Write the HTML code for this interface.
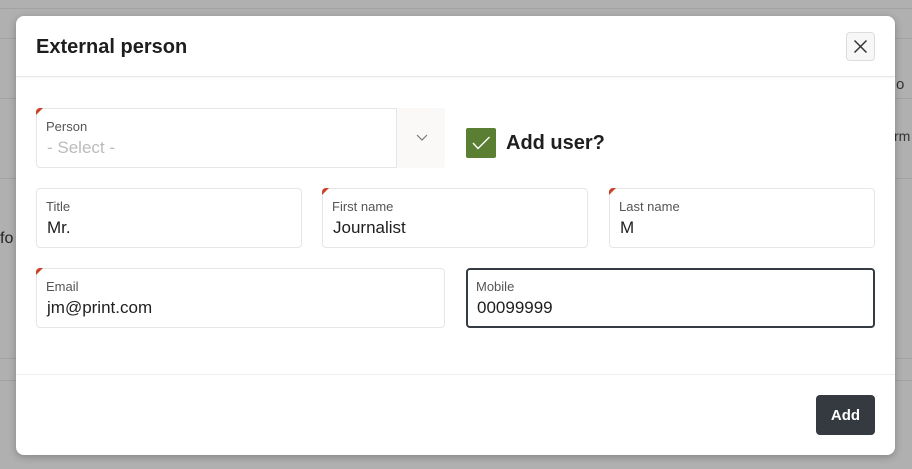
<!DOCTYPE html>
<html><head><style>
*{box-sizing:border-box;margin:0;padding:0}
body{width:912px;height:469px;background:#b0b0b0;font-family:"Liberation Sans",sans-serif;position:relative;overflow:hidden}
.bgl{position:absolute;left:0;right:0;height:1px;background:#a2a2a2}
.modal{position:absolute;left:16px;top:16px;width:879px;height:439px;background:#fff;border-radius:8px;box-shadow:0 2px 8px rgba(0,0,0,.25)}
.hdr{position:absolute;left:0;top:0;right:0;height:61px;border-bottom:1px solid #e8e8e8;border-radius:8px 8px 0 0;box-shadow:0 1px 2px rgba(0,0,0,.04)}
.hdr h1{position:absolute;left:20px;top:20px;font-size:20px;font-weight:bold;color:#1e1e1e}
.close{position:absolute;left:830px;top:16px;width:29px;height:29px;border:1px solid #ddd;border-radius:4px;background:#f7f7f7}
.f{position:absolute;border:1px solid #e6e6e6;border-radius:4px;background:#fff;height:60px}
.f .l{position:absolute;left:9px;top:10px;font-size:13px;color:#555}
.f .v{position:absolute;left:10px;top:29px;font-size:17px;color:#1e1e1e}
.req::before{content:"";position:absolute;left:-1px;top:-1px;border-top:7px solid #c9432b;border-right:7px solid transparent;border-top-left-radius:4px}
.foot{position:absolute;left:0;right:0;top:358px;border-top:1px solid #eee}
.add{position:absolute;left:800px;top:379px;width:59px;height:40px;background:#343a40;border-radius:4px;color:#fff;font-weight:bold;font-size:15px;text-align:center;line-height:42px}
</style></head><body>
<div class="bgl" style="top:8px"></div>
<div class="bgl" style="top:38px"></div>
<div class="bgl" style="top:98px"></div>
<div class="bgl" style="top:178px"></div>
<div class="bgl" style="top:358px"></div>
<div class="bgl" style="top:380px"></div>
<div style="position:absolute;left:0;top:230px;font-size:16px;color:#222">fo</div>
<div style="position:absolute;left:896px;top:76px;font-size:15px;color:#333">o</div>
<div style="position:absolute;left:894px;top:128px;font-size:14px;color:#333">rm</div>
<div class="modal">
 <div class="hdr"><h1>External person</h1>
  <div class="close"><svg width="27" height="27" viewBox="0 0 27 27"><path d="M7.5 7.5L19.5 19.5M19.5 7.5L7.5 19.5" stroke="#333" stroke-width="1.5"/></svg></div>
 </div>
 <div class="f req" style="left:20px;top:92px;width:409px">
  <div class="l">Person</div><div class="v" style="color:#bbb">- Select -</div>
  <div style="position:absolute;left:359px;top:-1px;width:49px;height:60px;border-left:1px solid #e6e6e6;background:#faf9f7;border-radius:0 4px 4px 0">
   <svg width="49" height="60"><path d="M20 27l5 5 5-5" stroke="#777" fill="none" stroke-width="1.2"/></svg></div>
 </div>
 <div style="position:absolute;left:450px;top:112px;width:30px;height:30px;background:#5a7f32;border-radius:2px">
  <svg width="30" height="30"><path d="M7 15l5 5.5L23.5 9" stroke="#fff" fill="none" stroke-width="1.4"/></svg></div>
 <div style="position:absolute;left:490px;top:116px;font-size:20px;font-weight:bold;color:#1e1e1e">Add user?</div>
 <div class="f" style="left:20px;top:172px;width:266px"><div class="l">Title</div><div class="v">Mr.</div></div>
 <div class="f req" style="left:306px;top:172px;width:266px"><div class="l">First name</div><div class="v">Journalist</div></div>
 <div class="f req" style="left:593px;top:172px;width:266px"><div class="l">Last name</div><div class="v">M</div></div>
 <div class="f req" style="left:20px;top:252px;width:409px"><div class="l">Email</div><div class="v">jm@print.com</div></div>
 <div class="f" style="left:450px;top:252px;width:409px;border:2px solid #353b42"><div class="l" style="left:8px;top:9px">Mobile</div><div class="v" style="left:9px;top:28px">00099999</div></div>
 <div class="foot"></div>
 <div class="add">Add</div>
</div>
</body></html>
